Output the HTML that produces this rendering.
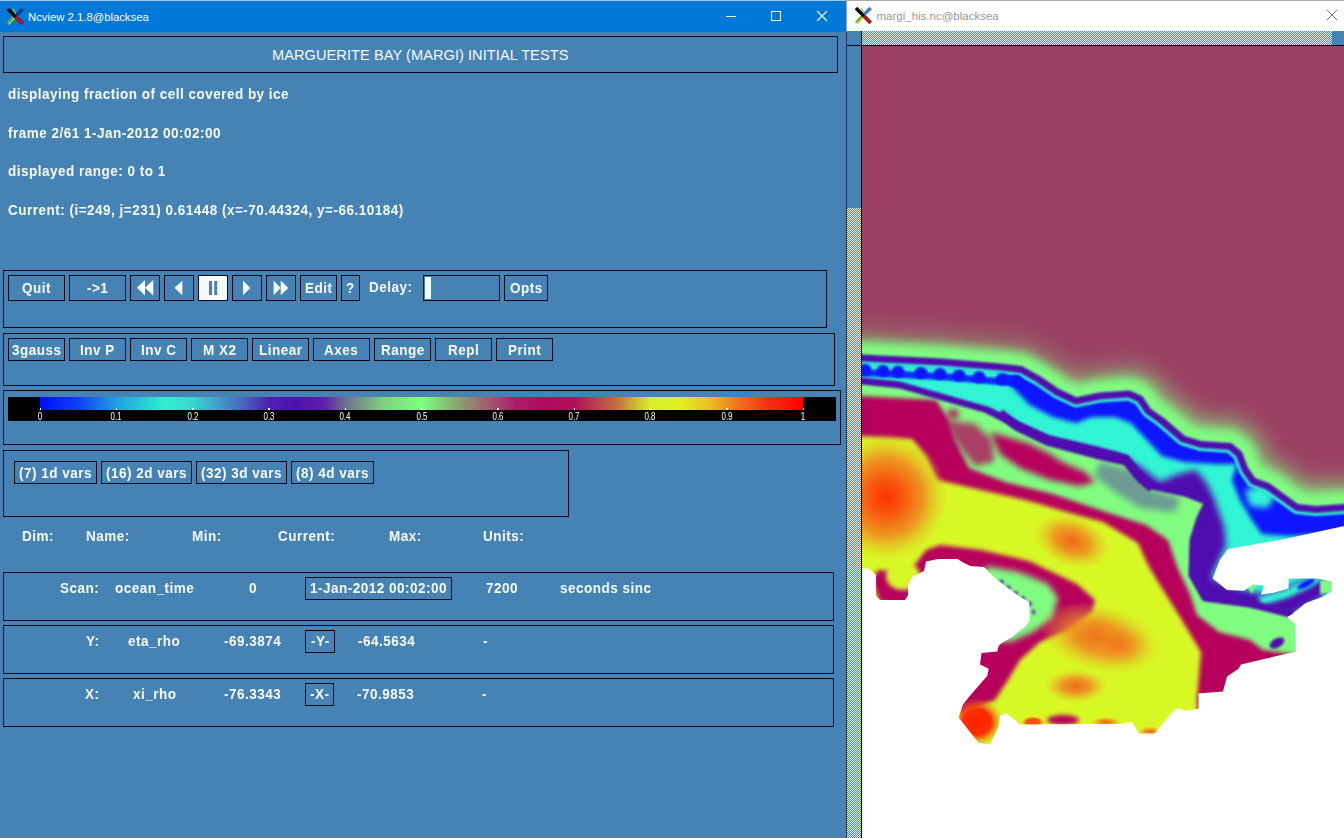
<!DOCTYPE html>
<html><head><meta charset="utf-8">
<style>
*{box-sizing:border-box;margin:0;padding:0}
html,body{width:1344px;height:838px;overflow:hidden;background:#4682b4}
body{position:relative;font-family:"Liberation Sans",sans-serif;color:#f4fcfc}
.a{position:absolute}
.t{position:absolute;font-weight:bold;line-height:16px;white-space:nowrap}
.bx{position:absolute;border:1px solid #000818}
.chk{background:repeating-conic-gradient(#e8fcfc 0 25%,#4682b4 0 50%) 0 0/2px 2px}
.cl{position:absolute;top:410px;font-size:11px;line-height:12px;color:#fff;transform:scaleX(0.72);transform-origin:50% 0;width:30px;text-align:center;letter-spacing:0}
</style></head><body>

<div class="a" style="left:0;top:0;width:846px;height:1px;background:#a6c8e8"></div>
<div class="a" style="left:0;top:1px;width:846px;height:31px;background:#0078d7"></div>
<svg class="a" style="left:7px;top:7.5px" width="17" height="17" viewBox="0 0 17 17">
<path d="M1 1 L15.5 15.8" stroke="#000" stroke-width="3.4"/>
<path d="M8.6 8.8 L15.5 15.8" stroke="#c0141e" stroke-width="3.2"/>
<path d="M15.6 1 L9.2 7.4" stroke="#0a3a90" stroke-width="3.4"/>
<path d="M7 9.6 L1 15.8" stroke="#8ad82a" stroke-width="3.4"/>
<path d="M6 1.2 L8.8 5.6" stroke="#8ad82a" stroke-width="1.3"/>
<path d="M8.3 7.8 L1 15.2" stroke="#000" stroke-width="0.9" stroke-dasharray="1 1"/>
</svg>
<div class="t" style="left:28px;top:9px;font-size:11.3px;font-weight:normal;color:#fff;line-height:16px">Ncview 2.1.8@blacksea</div>
<div class="a" style="left:726px;top:16px;width:10px;height:1px;background:#fff"></div>
<div class="a" style="left:771px;top:11px;width:10px;height:10px;border:1px solid #fff"></div>
<svg class="a" style="left:816px;top:10px" width="12" height="12" viewBox="0 0 12 12"><path d="M1 1L11 11M11 1L1 11" stroke="#fff" stroke-width="1.1"/></svg>
<div class="bx" style="left:3px;top:36px;width:835px;height:37px;"></div>
<div class="t" style="left:272px;top:47.15px;font-size:14.6px;letter-spacing:0.05px;font-weight:normal;">MARGUERITE BAY (MARGI) INITIAL TESTS</div>
<div class="t" style="left:8.00px;top:86.30px;font-size:15px;letter-spacing:0.55px;transform:scaleX(0.9);transform-origin:0 0;">displaying fraction of cell covered by ice</div>
<div class="t" style="left:8.00px;top:124.80px;font-size:15px;letter-spacing:0.55px;transform:scaleX(0.9);transform-origin:0 0;">frame 2/61 1-Jan-2012 00:02:00</div>
<div class="t" style="left:8.00px;top:163.30px;font-size:15px;letter-spacing:0.55px;transform:scaleX(0.9);transform-origin:0 0;">displayed range: 0 to 1</div>
<div class="t" style="left:8.00px;top:201.80px;font-size:15px;letter-spacing:0.55px;transform:scaleX(0.9);transform-origin:0 0;">Current: (i=249, j=231) 0.61448 (x=-70.44324, y=-66.10184)</div>
<div class="bx" style="left:3px;top:270px;width:824px;height:58px;"></div>
<div class="bx" style="left:8px;top:275px;width:57px;height:26px;"></div>
<div class="t" style="left:22.01px;top:279.60px;font-size:15px;letter-spacing:0.55px;transform:scaleX(0.9);transform-origin:0 0;">Quit</div>
<div class="bx" style="left:69px;top:275px;width:57px;height:26px;"></div>
<div class="t" style="left:86.81px;top:279.60px;font-size:15px;letter-spacing:0.55px;transform:scaleX(0.9);transform-origin:0 0;">-&gt;1</div>
<div class="bx" style="left:130px;top:275px;width:30px;height:26px;"></div>
<div class="bx" style="left:164px;top:275px;width:30px;height:26px;"></div>
<div class="bx" style="left:232px;top:275px;width:30px;height:26px;"></div>
<div class="bx" style="left:266px;top:275px;width:30px;height:26px;"></div>
<div class="bx" style="left:198px;top:275px;width:30px;height:26px;background:#f4fcfc;"></div>
<svg class="a" style="left:0;top:0" width="600" height="320" viewBox="0 0 600 320"><polygon points="137,287.8 145,280 145,295.5" fill="#f4fcfc"/><polygon points="145,287.8 153.3,280 153.3,295.5" fill="#f4fcfc"/><polygon points="174.4,287.8 182.3,280.8 182.3,295.3" fill="#f4fcfc"/><rect x="209" y="281" width="3" height="14" fill="#4682b4"/><rect x="214.2" y="281" width="3" height="14" fill="#4682b4"/><polygon points="243,280.6 250.4,287.9 243,295.2" fill="#f4fcfc"/><polygon points="273.6,280.6 280.7,287.9 273.6,295.2" fill="#f4fcfc"/><polygon points="280.7,280.6 288.3,287.9 280.7,295.2" fill="#f4fcfc"/></svg>
<div class="bx" style="left:300px;top:275px;width:37px;height:26px;"></div>
<div class="t" style="left:304.76px;top:279.60px;font-size:15px;letter-spacing:0.55px;transform:scaleX(0.9);transform-origin:0 0;">Edit</div>
<div class="bx" style="left:341px;top:275px;width:19px;height:26px;"></div>
<div class="t" style="left:346.13px;top:279.60px;font-size:15px;letter-spacing:0.55px;transform:scaleX(0.9);transform-origin:0 0;">?</div>
<div class="t" style="left:369.00px;top:278.80px;font-size:15px;letter-spacing:0.55px;transform:scaleX(0.9);transform-origin:0 0;">Delay:</div>
<div class="bx" style="left:423px;top:275px;width:77px;height:26px;"></div>
<div class="a" style="left:425px;top:277px;width:6px;height:22px;background:#f4fcfc"></div>
<div class="bx" style="left:504px;top:275px;width:44px;height:26px;"></div>
<div class="t" style="left:509.63px;top:279.60px;font-size:15px;letter-spacing:0.55px;transform:scaleX(0.9);transform-origin:0 0;">Opts</div>
<div class="bx" style="left:3px;top:333px;width:832px;height:53px;"></div>
<div class="bx" style="left:8px;top:338px;width:57px;height:23px;"></div>
<div class="t" style="left:11.76px;top:341.50px;font-size:15px;letter-spacing:0.55px;transform:scaleX(0.9);transform-origin:0 0;">3gauss</div>
<div class="bx" style="left:69px;top:338px;width:57px;height:23px;"></div>
<div class="t" style="left:80.13px;top:341.50px;font-size:15px;letter-spacing:0.55px;transform:scaleX(0.9);transform-origin:0 0;">Inv P</div>
<div class="bx" style="left:130px;top:338px;width:57px;height:23px;"></div>
<div class="t" style="left:140.76px;top:341.50px;font-size:15px;letter-spacing:0.55px;transform:scaleX(0.9);transform-origin:0 0;">Inv C</div>
<div class="bx" style="left:191px;top:338px;width:57px;height:23px;"></div>
<div class="t" style="left:202.75px;top:341.50px;font-size:15px;letter-spacing:0.55px;transform:scaleX(0.9);transform-origin:0 0;">M X2</div>
<div class="bx" style="left:252px;top:338px;width:57px;height:23px;"></div>
<div class="t" style="left:258.76px;top:341.50px;font-size:15px;letter-spacing:0.55px;transform:scaleX(0.9);transform-origin:0 0;">Linear</div>
<div class="bx" style="left:313px;top:338px;width:57px;height:23px;"></div>
<div class="t" style="left:324.37px;top:341.50px;font-size:15px;letter-spacing:0.55px;transform:scaleX(0.9);transform-origin:0 0;">Axes</div>
<div class="bx" style="left:374px;top:338px;width:57px;height:23px;"></div>
<div class="t" style="left:380.64px;top:341.50px;font-size:15px;letter-spacing:0.55px;transform:scaleX(0.9);transform-origin:0 0;">Range</div>
<div class="bx" style="left:435px;top:338px;width:57px;height:23px;"></div>
<div class="t" style="left:447.88px;top:341.50px;font-size:15px;letter-spacing:0.55px;transform:scaleX(0.9);transform-origin:0 0;">Repl</div>
<div class="bx" style="left:496px;top:338px;width:57px;height:23px;"></div>
<div class="t" style="left:507.89px;top:341.50px;font-size:15px;letter-spacing:0.55px;transform:scaleX(0.9);transform-origin:0 0;">Print</div>
<div class="bx" style="left:3px;top:390px;width:838px;height:55px;"></div>
<div class="a" style="left:8px;top:397px;width:828px;height:24px;background:#000"></div>
<div class="a" style="left:40px;top:397px;width:763px;height:13px;background:linear-gradient(to right,#0010ff 0.0%,#1040f0 5.0%,#20a0e0 10.0%,#30f0d0 16.5%,#38d8d0 20.0%,#4870c0 26.0%,#5020b0 30.0%,#5010b0 33.5%,#6020a8 37.4%,#707090 40.0%,#80d080 45.0%,#80ff80 50.0%,#8ca070 55.0%,#a06070 58.5%,#a82068 62.3%,#b00a60 66.0%,#b01058 70.0%,#c07040 75.6%,#d8f028 80.0%,#e0f020 84.0%,#e8c020 87.8%,#f07020 91.6%,#f83010 95.4%,#ff0000 100.0%)"></div>
<div class="a" style="left:39.5px;top:408px;width:1.5px;height:2px;background:#fff"></div>
<div class="cl" style="left:25.0px">0</div>
<div class="a" style="left:115.8px;top:408px;width:1.5px;height:2px;background:#fff"></div>
<div class="cl" style="left:101.3px">0.1</div>
<div class="a" style="left:192.1px;top:408px;width:1.5px;height:2px;background:#fff"></div>
<div class="cl" style="left:177.6px">0.2</div>
<div class="a" style="left:268.4px;top:408px;width:1.5px;height:2px;background:#fff"></div>
<div class="cl" style="left:253.9px">0.3</div>
<div class="a" style="left:344.7px;top:408px;width:1.5px;height:2px;background:#fff"></div>
<div class="cl" style="left:330.2px">0.4</div>
<div class="a" style="left:421.0px;top:408px;width:1.5px;height:2px;background:#fff"></div>
<div class="cl" style="left:406.5px">0.5</div>
<div class="a" style="left:497.3px;top:408px;width:1.5px;height:2px;background:#fff"></div>
<div class="cl" style="left:482.8px">0.6</div>
<div class="a" style="left:573.6px;top:408px;width:1.5px;height:2px;background:#fff"></div>
<div class="cl" style="left:559.1px">0.7</div>
<div class="a" style="left:649.9px;top:408px;width:1.5px;height:2px;background:#fff"></div>
<div class="cl" style="left:635.4px">0.8</div>
<div class="a" style="left:726.2px;top:408px;width:1.5px;height:2px;background:#fff"></div>
<div class="cl" style="left:711.7px">0.9</div>
<div class="a" style="left:802.5px;top:408px;width:1.5px;height:2px;background:#fff"></div>
<div class="cl" style="left:788.0px">1</div>
<div class="bx" style="left:3px;top:450px;width:566px;height:67px;"></div>
<div class="bx" style="left:14px;top:461px;width:83px;height:23px;"></div>
<div class="t" style="left:19.00px;top:464.50px;font-size:15px;letter-spacing:0.55px;transform:scaleX(0.9);transform-origin:0 0;">(7) 1d vars</div>
<div class="bx" style="left:101px;top:461px;width:91px;height:23px;"></div>
<div class="t" style="left:106.00px;top:464.50px;font-size:15px;letter-spacing:0.55px;transform:scaleX(0.9);transform-origin:0 0;">(16) 2d vars</div>
<div class="bx" style="left:196px;top:461px;width:91px;height:23px;"></div>
<div class="t" style="left:201.00px;top:464.50px;font-size:15px;letter-spacing:0.55px;transform:scaleX(0.9);transform-origin:0 0;">(32) 3d vars</div>
<div class="bx" style="left:291px;top:461px;width:83px;height:23px;"></div>
<div class="t" style="left:296.00px;top:464.50px;font-size:15px;letter-spacing:0.55px;transform:scaleX(0.9);transform-origin:0 0;">(8) 4d vars</div>
<div class="t" style="left:21.50px;top:527.60px;font-size:15px;letter-spacing:0.55px;transform:scaleX(0.9);transform-origin:0 0;">Dim:</div>
<div class="t" style="left:86.00px;top:527.60px;font-size:15px;letter-spacing:0.55px;transform:scaleX(0.9);transform-origin:0 0;">Name:</div>
<div class="t" style="left:192.30px;top:527.60px;font-size:15px;letter-spacing:0.55px;transform:scaleX(0.9);transform-origin:0 0;">Min:</div>
<div class="t" style="left:277.50px;top:527.60px;font-size:15px;letter-spacing:0.55px;transform:scaleX(0.9);transform-origin:0 0;">Current:</div>
<div class="t" style="left:389.30px;top:527.60px;font-size:15px;letter-spacing:0.55px;transform:scaleX(0.9);transform-origin:0 0;">Max:</div>
<div class="t" style="left:483.40px;top:527.60px;font-size:15px;letter-spacing:0.55px;transform:scaleX(0.9);transform-origin:0 0;">Units:</div>
<div class="bx" style="left:3px;top:572px;width:831px;height:49px;"></div>
<div class="t" style="left:60.27px;top:580.30px;font-size:15px;letter-spacing:0.55px;transform:scaleX(0.9);transform-origin:0 0;">Scan:</div>
<div class="t" style="left:114.88px;top:580.30px;font-size:15px;letter-spacing:0.55px;transform:scaleX(0.9);transform-origin:0 0;">ocean_time</div>
<div class="t" style="left:249.00px;top:580.30px;font-size:15px;letter-spacing:0.55px;transform:scaleX(0.9);transform-origin:0 0;">0</div>
<div class="bx" style="left:305px;top:577px;width:147px;height:23px;"></div>
<div class="t" style="left:309.99px;top:580.30px;font-size:15px;letter-spacing:0.55px;transform:scaleX(0.9);transform-origin:0 0;">1-Jan-2012 00:02:00</div>
<div class="t" style="left:486.39px;top:580.30px;font-size:15px;letter-spacing:0.55px;transform:scaleX(0.9);transform-origin:0 0;">7200</div>
<div class="t" style="left:559.60px;top:580.30px;font-size:15px;letter-spacing:0.55px;transform:scaleX(0.9);transform-origin:0 0;">seconds sinc</div>
<div class="bx" style="left:3px;top:625px;width:831px;height:49px;"></div>
<div class="t" style="left:86.01px;top:633.10px;font-size:15px;letter-spacing:0.55px;transform:scaleX(0.9);transform-origin:0 0;">Y:</div>
<div class="t" style="left:128.38px;top:633.10px;font-size:15px;letter-spacing:0.55px;transform:scaleX(0.9);transform-origin:0 0;">eta_rho</div>
<div class="t" style="left:224.36px;top:633.10px;font-size:15px;letter-spacing:0.55px;transform:scaleX(0.9);transform-origin:0 0;">-69.3874</div>
<div class="bx" style="left:305px;top:630px;width:30px;height:23px;"></div>
<div class="t" style="left:310.63px;top:633.10px;font-size:15px;letter-spacing:0.55px;transform:scaleX(0.9);transform-origin:0 0;">-Y-</div>
<div class="t" style="left:357.76px;top:633.10px;font-size:15px;letter-spacing:0.55px;transform:scaleX(0.9);transform-origin:0 0;">-64.5634</div>
<div class="t" style="left:482.70px;top:633.10px;font-size:15px;letter-spacing:0.55px;transform:scaleX(0.9);transform-origin:0 0;">-</div>
<div class="bx" style="left:3px;top:678px;width:831px;height:49px;"></div>
<div class="t" style="left:85.01px;top:686.10px;font-size:15px;letter-spacing:0.55px;transform:scaleX(0.9);transform-origin:0 0;">X:</div>
<div class="t" style="left:132.76px;top:686.10px;font-size:15px;letter-spacing:0.55px;transform:scaleX(0.9);transform-origin:0 0;">xi_rho</div>
<div class="t" style="left:224.36px;top:686.10px;font-size:15px;letter-spacing:0.55px;transform:scaleX(0.9);transform-origin:0 0;">-76.3343</div>
<div class="bx" style="left:305px;top:683px;width:29px;height:23px;"></div>
<div class="t" style="left:309.76px;top:686.10px;font-size:15px;letter-spacing:0.55px;transform:scaleX(0.9);transform-origin:0 0;">-X-</div>
<div class="t" style="left:356.56px;top:686.10px;font-size:15px;letter-spacing:0.55px;transform:scaleX(0.9);transform-origin:0 0;">-70.9853</div>
<div class="t" style="left:481.80px;top:686.10px;font-size:15px;letter-spacing:0.55px;transform:scaleX(0.9);transform-origin:0 0;">-</div>
<div class="a" style="left:846px;top:0;width:498px;height:1px;background:#a8a8a8"></div>
<div class="a" style="left:846px;top:1px;width:1px;height:31px;background:#7fb0e0"></div>
<div class="a" style="left:847px;top:1px;width:497px;height:30px;background:#fff"></div>
<svg class="a" style="left:855px;top:6.5px" width="17" height="17" viewBox="0 0 17 17">
<path d="M1 1 L15.5 15.8" stroke="#000" stroke-width="3.4"/>
<path d="M8.6 8.8 L15.5 15.8" stroke="#c0141e" stroke-width="3.2"/>
<path d="M15.6 1 L9.2 7.4" stroke="#3a78e0" stroke-width="3.4"/>
<path d="M7 9.6 L1 15.8" stroke="#8ad82a" stroke-width="3.4"/>
<path d="M6 1.2 L8.8 5.6" stroke="#8ad82a" stroke-width="1.3"/>
<path d="M8.3 7.8 L1 15.2" stroke="#000" stroke-width="0.9" stroke-dasharray="1 1"/>
</svg>
<div class="t" style="left:876.5px;top:8px;font-size:11.5px;font-weight:normal;color:#999;line-height:16px">margi_his.nc@blacksea</div>
<svg class="a" style="left:1326px;top:9px" width="12" height="12" viewBox="0 0 12 12"><path d="M1 1L11 11M11 1L1 11" stroke="#777" stroke-width="1"/></svg>
<div class="a" style="left:846px;top:31px;width:498px;height:807px;background:#4682b4"></div>
<div class="a chk" style="left:862px;top:31px;width:470px;height:14px"></div>
<div class="a chk" style="left:847px;top:208px;width:14px;height:630px"></div>
<div class="a" style="left:847px;top:45px;width:497px;height:1px;background:#000818"></div>
<div class="a" style="left:861px;top:31px;width:1px;height:807px;background:#000818"></div>
<div class="a" style="left:846px;top:32px;width:1px;height:806px;background:#1a3c64"></div>
<svg class="a" style="left:862px;top:46px" width="482" height="792" viewBox="862 46 482 792">
<defs>
<filter id="b1" filterUnits="userSpaceOnUse" x="840" y="30" width="540" height="840"><feGaussianBlur stdDeviation="1"/></filter>
<filter id="b2" filterUnits="userSpaceOnUse" x="840" y="30" width="540" height="840"><feGaussianBlur stdDeviation="2"/></filter>
<filter id="b3" filterUnits="userSpaceOnUse" x="840" y="30" width="540" height="840"><feGaussianBlur stdDeviation="3"/></filter>
<filter id="b4" filterUnits="userSpaceOnUse" x="840" y="30" width="540" height="840"><feGaussianBlur stdDeviation="4"/></filter>
<filter id="b5" filterUnits="userSpaceOnUse" x="840" y="30" width="540" height="840"><feGaussianBlur stdDeviation="5"/></filter>
<filter id="b8" filterUnits="userSpaceOnUse" x="840" y="30" width="540" height="840"><feGaussianBlur stdDeviation="8"/></filter>
<filter id="b10" filterUnits="userSpaceOnUse" x="840" y="30" width="540" height="840"><feGaussianBlur stdDeviation="10"/></filter>
<clipPath id="in1"><polygon points="850,358 862,358 942,362 1000,367 1021,369.5 1038,379 1057,392 1076,401 1100,396 1129,394 1140,399 1148,411 1162,421 1183,439 1201,444.5 1230,446.5 1239,454 1245,469.5 1253,481 1268,486.5 1281,496 1297,507.5 1316,509.5 1344,507.5 1360,507.5 1360,850 850,850"/></clipPath>
<clipPath id="in2"><polygon points="850,381 862,381 900,385 940,396.5 986,409.5 1017,424.5 1048,438.5 1095,449.5 1126,458 1140,476 1152,486 1185,493 1208,502 1200,518 1193,540 1192,575 1205,598 1250,604 1290,614 1300,620 1360,640 1360,850 850,850"/></clipPath>
<radialGradient id="rg1"><stop offset="0" stop-color="#ff3400"/><stop offset="0.3" stop-color="#f85a10"/><stop offset="0.6" stop-color="#f08a20" stop-opacity="0.9"/><stop offset="1" stop-color="#e8c020" stop-opacity="0"/></radialGradient>
<radialGradient id="rg2"><stop offset="0" stop-color="#f06818"/><stop offset="0.45" stop-color="#f08820" stop-opacity="0.85"/><stop offset="1" stop-color="#e8c020" stop-opacity="0"/></radialGradient>
<radialGradient id="rg3"><stop offset="0" stop-color="#ff2000"/><stop offset="0.55" stop-color="#ff3000"/><stop offset="1" stop-color="#f09020" stop-opacity="0"/></radialGradient>
<linearGradient id="gmg" gradientUnits="userSpaceOnUse" x1="1040" y1="0" x2="1180" y2="0"><stop offset="0" stop-color="#fff" stop-opacity="0.6"/><stop offset="1" stop-color="#fff" stop-opacity="1"/></linearGradient>
<mask id="gm" maskUnits="userSpaceOnUse" x="850" y="40" width="520" height="820"><rect x="850" y="40" width="520" height="820" fill="url(#gmg)"/></mask>
</defs>
<rect x="850" y="40" width="520" height="820" fill="#9b4163"/>
<path d="M850,358 L862,358 L942,362 L1000,367 L1021,369.5 L1038,379 L1057,392 L1076,401 L1100,396 L1129,394 L1140,399 L1148,411 L1162,421 L1183,439 L1201,444.5 L1230,446.5 L1239,454 L1245,469.5 L1253,481 L1268,486.5 L1281,496 L1297,507.5 L1316,509.5 L1344,507.5 L1360,507.5" fill="none" stroke="#80fc80" stroke-width="56" stroke-linejoin="round" filter="url(#b10)" opacity="0.55" mask="url(#gm)"/>
<path d="M850,358 L862,358 L942,362 L1000,367 L1021,369.5 L1038,379 L1057,392 L1076,401 L1100,396 L1129,394 L1140,399 L1148,411 L1162,421 L1183,439 L1201,444.5 L1230,446.5 L1239,454 L1245,469.5 L1253,481 L1268,486.5 L1281,496 L1297,507.5 L1316,509.5 L1344,507.5 L1360,507.5" fill="none" stroke="#80fc80" stroke-width="34" stroke-linejoin="round" filter="url(#b5)"/>
<g clip-path="url(#in1)">
<rect x="850" y="300" width="520" height="560" fill="#30f4d4"/>
<polygon points="850,358 862,358 942,362 1000,367 1021,369.5 1038,379 1057,392 1076,401 1100,396 1129,394 1140,399 1148,411 1162,421 1183,439 1201,444.5 1230,446.5 1239,454 1245,469.5 1253,481 1268,486.5 1281,496 1297,507.5 1316,509.5 1344,507.5 1360,507.5 1360,532 1290,536 1262,534 1252,520 1240,500 1232,480 1237,464 1215,464 1184,462 1162,456 1146,439 1131,423 1115,417 1092,417 1076,423 1053,417 1030,405 1017,392 1000,371 940,366 900,364 862,362 850,362" fill="#0818fc" filter="url(#b2)"/>
<polygon points="1245,490 1262,486 1275,496 1268,508 1250,506" fill="#30f4d4" filter="url(#b3)"/>
<polygon points="1110,452 1140,466 1160,482 1178,474 1196,470 1206,482 1214,498 1224,526 1226,545 1211,578 1230,586 1262,594 1290,586 1318,574 1332,578 1322,598 1300,610 1290,616 1250,608 1205,600 1190,580 1188,540 1186,515 1150,505 1120,480" fill="#5010b0" filter="url(#b3)"/>
<polygon points="1258,597 1284,590 1303,581 1318,574 1322,580 1307,589 1287,598 1262,605" fill="#30f4d4" filter="url(#b2)"/>
<ellipse cx="1306" cy="584" rx="10" ry="3" fill="#0818fc" transform="rotate(-28 1306 584)" filter="url(#b1)"/>
<polygon points="1320,580 1332,580 1332,592 1320,594" fill="#80fc80" filter="url(#b1)"/>
<polygon points="1246,584 1256,584 1252,594" fill="#80fc80" filter="url(#b1)"/>
<path d="M850,358 L862,358 L942,362 L1000,367 L1021,369.5 L1038,379 L1057,392 L1076,401 L1100,396 L1129,394 L1140,399 L1148,411 L1162,421 L1183,439 L1201,444.5 L1230,446.5 L1239,454 L1245,469.5 L1253,481 L1268,486.5 L1281,496 L1297,507.5 L1316,509.5 L1344,507.5 L1360,507.5" fill="none" stroke="#30f4d4" stroke-width="13" stroke-linejoin="round" filter="url(#b1)"/>
<polygon points="850,369.0 860,369.0 870,369.4 880,369.9 890,370.4 900,370.9 910,371.4 920,371.9 930,372.4 940,372.9 950,373.6896551724138 960,374.55172413793105 970,375.41379310344826 980,376.2758620689655 990,377.13793103448273 1000,378.0 1010,379.1904761904762 1020,380.3809523809524 1020,387.3809523809524 1010,386.1904761904762 1000,385.0 990,384.13793103448273 980,383.2758620689655 970,382.41379310344826 960,381.55172413793105 950,380.6896551724138 940,379.9 930,379.4 920,378.9 910,378.4 900,377.9 890,377.4 880,376.9 870,376.4 860,376.0 850,376.0" fill="#0818fc" filter="url(#b1)" opacity="0.9"/>
<ellipse cx="865" cy="370.1" rx="6.5" ry="6" fill="#0818fc" filter="url(#b1)"/>
<ellipse cx="883" cy="371.1" rx="6.5" ry="6" fill="#0818fc" filter="url(#b1)"/>
<ellipse cx="898" cy="371.8" rx="6.5" ry="6" fill="#0818fc" filter="url(#b1)"/>
<ellipse cx="921" cy="372.9" rx="6.5" ry="6" fill="#0818fc" filter="url(#b1)"/>
<ellipse cx="940" cy="373.9" rx="6.5" ry="6" fill="#0818fc" filter="url(#b1)"/>
<ellipse cx="959" cy="375.5" rx="6.5" ry="6" fill="#0818fc" filter="url(#b1)"/>
<ellipse cx="979" cy="377.2" rx="6.5" ry="6" fill="#0818fc" filter="url(#b1)"/>
<ellipse cx="1002" cy="379.2" rx="6.5" ry="6" fill="#0818fc" filter="url(#b1)"/>
<ellipse cx="1016" cy="380.9" rx="6.5" ry="6" fill="#0818fc" filter="url(#b1)"/>
<g clip-path="url(#in2)">
<rect x="850" y="300" width="520" height="560" fill="#80fc80"/>
<polygon points="850,396 862,396 936,400 948,418 955,440 969,468 1005,482 1053,494 1103,511 1146,525 1168,540 1178,569 1190,594 1197,615 1219,632 1250,640 1263,650 1300,655 1300,760 850,760" fill="#b6045c" filter="url(#b2)"/>
<polygon points="990,432 1030,444 1050,454 1062,462 1085,472 1095,482 1080,486 1050,480 1020,468 1000,454" fill="#b6045c" filter="url(#b3)"/>
<polygon points="948,410 958,410 958,418 948,418" fill="#b6045c" filter="url(#b3)"/>
<polygon points="945,420 975,424 992,440 994,462 975,466 958,445" fill="#b6045c" filter="url(#b3)" opacity="0.75"/>
<polygon points="1100,462 1130,470 1150,490 1180,498 1175,512 1140,508 1115,492 1095,476" fill="#5010b0" filter="url(#b3)" opacity="0.4"/>
<polygon points="850,436 862,436 912,439 926,456 938,480 981,490 1029,501 1077,515 1103,522 1138,543 1148,565 1160,585 1180,617 1201,652 1197,700 1200,760 850,760" fill="#d8f828" filter="url(#b2)"/>
<polygon points="914,566 926,550 940,545 981,550 1029,561 1077,584 1095,600 1092,612 1069,629 1040,642 1020,660 1008,680 995,700 975,708 955,715 940,700 930,650 912,605 880,602 872,580 878,570 900,572" fill="#b6045c" filter="url(#b2)"/>
<polygon points="986,566 1019,572 1048,584 1058,598 1052,618 1033,632 1010,642 990,640 980,600" fill="#80fc80" filter="url(#b3)"/>
<path d="M1000,580 L1012,590 L1030,603 L1036,618" fill="none" stroke="#6a5ab8" stroke-width="3.5" stroke-dasharray="5 4" filter="url(#b1)"/>
<ellipse cx="903" cy="576" rx="17" ry="14" fill="#d8f828" filter="url(#b2)"/>
<ellipse cx="886" cy="497" rx="62" ry="64" fill="url(#rg1)"/>
<ellipse cx="1072" cy="541" rx="40" ry="26" fill="url(#rg2)" transform="rotate(20 1072 541)"/>
<ellipse cx="1100" cy="638" rx="62" ry="34" fill="url(#rg2)" transform="rotate(14 1100 638)"/>
<ellipse cx="1076" cy="686" rx="32" ry="17" fill="url(#rg2)"/>
<ellipse cx="1120" cy="645" rx="30" ry="22" fill="url(#rg2)" opacity="0.6"/>
<ellipse cx="977" cy="722" rx="26" ry="24" fill="url(#rg3)"/>
<ellipse cx="1033" cy="722" rx="12" ry="6" fill="url(#rg3)" opacity="0.8"/>
<ellipse cx="1063" cy="720" rx="16" ry="5" fill="#b6045c" filter="url(#b2)"/>
<ellipse cx="1150" cy="732" rx="12" ry="6" fill="url(#rg2)"/>
<ellipse cx="1106" cy="722" rx="16" ry="5" fill="url(#rg2)"/>
<ellipse cx="1277" cy="643" rx="8" ry="4.5" fill="#5010b0" transform="rotate(-30 1277 643)" filter="url(#b1)"/>
</g>
<path d="M850,381 L862,381 L900,385 L940,396.5 L986,409.5 L1017,424.5 L1048,438.5 L1095,449.5 L1126,458 L1140,476 L1152,486 L1185,493 L1208,502 L1200,518 L1193,540 L1192,575 L1205,598 L1250,604 L1290,614 L1300,620 L1360,640" fill="none" stroke="#5010b0" stroke-width="7" stroke-linejoin="round" filter="url(#b1)"/>
<path d="M1000,413 L1017,426.5 L1048,441.5 L1095,454 L1126,461 L1140,478 L1152,488" fill="none" stroke="#5010b0" stroke-width="9" stroke-linejoin="round" filter="url(#b1)"/>
</g>
<path d="M850,358 L862,358 L942,362 L1000,367 L1021,369.5 L1038,379 L1057,392 L1076,401 L1100,396 L1129,394 L1140,399 L1148,411 L1162,421 L1183,439 L1201,444.5 L1230,446.5 L1239,454 L1245,469.5 L1253,481 L1268,486.5 L1281,496 L1297,507.5 L1316,509.5 L1344,507.5 L1360,507.5" fill="none" stroke="#5010b0" stroke-width="7" stroke-linejoin="round" filter="url(#b1)"/>
<polygon points="850,568 862,568 869.5,569 876,575 876,596 880,600 905,600 908,595 908,585 912.5,576.5 924,571 926,561.5 938,559 957.6,559 963,562.6 970.5,566 984,567 997,580 1009,589 1020,597 1029,602 1030,620 1026,626 1012,637 1002,643 998.7,645.7 997.3,651.5 981.5,653 980,664.4 988.7,668.7 987.3,675.8 978.7,685.8 968.7,697.3 963,704.5 958.6,717.4 978.7,743 990,744.6 998.7,726 1000,716 1006,713 1020,724.5 1120,724 1131.6,722 1139,733.6 1154.5,733.6 1171.7,712.6 1177.5,708 1185,710.7 1198.5,708.8 1198.5,693.5 1223,691.6 1227,676.4 1238.5,668.7 1241,664.6 1264,659 1295.7,651.7 1295.7,624.5 1287,617.3 1291.4,614.4 1305.8,603 1321.5,597.2 1331.6,591.5 1331.6,581.5 1317,578.6 1288.6,578.6 1288.6,588.6 1272.8,593 1261,594.4 1264,585.8 1252.8,584.4 1244,590.8 1227,590 1212.7,578.6 1219.8,560 1228,549 1262,543 1285,539 1344,526 1360,526 1360,850 850,850" fill="#ffffff"/>
</svg>
</body></html>
